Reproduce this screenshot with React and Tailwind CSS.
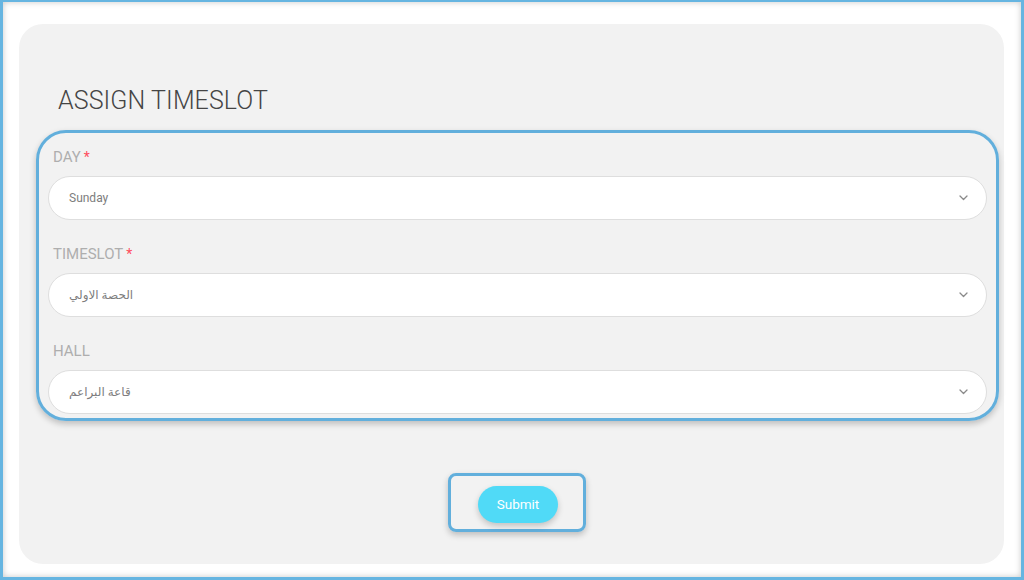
import React from "react";

function Chevron() {
  return (
    <svg width="9" height="6" viewBox="0 0 9 6" fill="none" className="shrink-0">
      <path d="M1 1l3.5 3.5L8 1" stroke="#8a8a8a" strokeWidth="1.3" strokeLinecap="round" strokeLinejoin="round" />
    </svg>
  );
}

function Field({ label, required, value, first }) {
  return (
    <div className={first ? "" : "mt-[25px]"}>
      <div className="pl-[5px] text-[15px] leading-[18px] text-[#aeaeae] flex items-start">
        <span>{label}</span>
        {required && <span className="ml-[3px] text-[#ff4d5e] text-[14px]">*</span>}
      </div>
      <div className="mt-[10px] h-[44px] w-full rounded-full bg-white border border-[#dedede] flex items-center justify-between pl-[20px] pr-[18px]">
        <span className="text-[12px] text-[#7d7d7d]" style={{ fontFamily: 'Roboto, "DejaVu Sans", sans-serif' }}>{value}</span>
        <Chevron />
      </div>
    </div>
  );
}

export default function App() {
  return (
    <div
      className="w-[1024px] h-[580px] border-[3px] border-t-[2px] border-[#66b5e1] bg-white shadow-[inset_0_0_6px_rgba(0,0,0,0.22)] flex flex-col pt-[22px] pl-[16px] pr-[17px] pb-[13px]"
      style={{ fontFamily: 'Roboto, "DejaVu Sans", sans-serif' }}
    >
      <div className="flex-1 rounded-[24px] bg-[#f2f2f2] flex flex-col">
        <h1 className="mt-[62px] ml-[39px] text-[25px] leading-[30px] font-light text-[#454545] tracking-[0.1px]">
          ASSIGN TIMESLOT
        </h1>
        <div className="mt-[14px] ml-[17px] w-[963px] rounded-[30px] border-[3px] border-[#62afdc] shadow-[0_3px_6px_rgba(0,0,0,0.22)] pt-[15px] px-[9px] pb-[4px]">
          <Field label="DAY" required value="Sunday" first />
          <Field label="TIMESLOT" required value="الحصة الاولي" />
          <Field label="HALL" value="قاعة البراعم" />
        </div>
        <div className="mt-[52px] ml-[429px] w-[138px] h-[59px] rounded-[8px] border-[3px] border-[#62afdc] shadow-[0_3px_6px_rgba(0,0,0,0.22)] flex items-center pl-[27px] pt-[4px]">
          <button className="w-[80px] h-[37px] rounded-full bg-[#50daf7] text-white text-[13.5px] shadow-[0_3px_6px_rgba(0,0,0,0.2)]">
            Submit
          </button>
        </div>
      </div>
    </div>
  );
}
